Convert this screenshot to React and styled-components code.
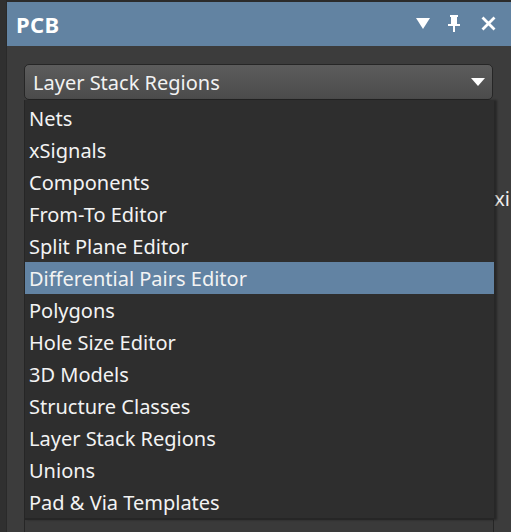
import React from "react";
import styled, { createGlobalStyle } from "styled-components";

const GlobalStyle = createGlobalStyle`
  html, body {
    margin: 0;
    padding: 0;
    background: #2d2d2d;
  }
`;

const Frame = styled.div`
  width: 511px;
  height: 532px;
  display: flex;
  overflow: hidden;
  font-family: "Noto Sans", "Open Sans", sans-serif;
`;

const LeftEdge = styled.div`
  width: 7px;
  background: #303030;
  border-right: 1px solid #2a2a2a;
  box-sizing: border-box;
`;

const Panel = styled.div`
  flex: 1;
  display: flex;
  flex-direction: column;
  border-top: 2px solid #2b2b2b;
  background: #3c3c3c;
`;

const TitleBar = styled.div`
  height: 44px;
  flex-shrink: 0;
  display: flex;
  align-items: center;
  padding: 0 15px 1px 9px;
  box-sizing: border-box;
  background: #6283a2;
  color: #fff;
`;

const Title = styled.div`
  flex: 1;
  font-size: 22px;
  font-weight: 700;
  letter-spacing: 0.3px;
`;

const TitleButtons = styled.div`
  display: flex;
  align-items: center;
  gap: 18px;

  svg:last-child {
    margin-left: 3px;
  }
`;

const Body = styled.div`
  position: relative;
  flex: 1;
  padding: 18px 18px 0 17px;
`;

const Combo = styled.div`
  height: 36px;
  box-sizing: border-box;
  display: flex;
  align-items: center;
  padding: 0 7px 0 8px;
  border: 1px solid #262626;
  border-radius: 5px;
  background: linear-gradient(#5c5c5c, #4b4b4b);
  color: #f2f2f2;
  font-size: 20px;
`;

const ComboText = styled.div`
  flex: 1;
`;

const Underlay = styled.div`
  display: flex;
  flex-direction: column;
  margin-right: -18px;
`;

const HiddenRow = styled.div`
  height: 32px;
  display: flex;
  justify-content: flex-end;
  align-items: center;
  color: #f0f0f0;
  font-size: 20px;
  white-space: nowrap;
  margin-right: 1px;
`;

const ListBox = styled.div`
  margin-top: ${(p) => p.$top}px;
  margin-right: 17px;
  height: 40px;
  border-left: 1px solid #262626;
  border-top: 2px solid #262626;
  border-right: 1px solid #262626;
  background: #3a3a3a;
`;

const Popup = styled.div`
  position: absolute;
  left: 17px;
  top: 54px;
  width: 470px;
  box-sizing: border-box;
  padding: 2px 0 0;
  background: #2e2e2e;
  border-left: 1px solid #262626;
  border-bottom: 2px solid #262626;
  box-shadow: 3px 0 2px rgba(0, 0, 0, 0.35);
`;

const Item = styled.div`
  height: 32px;
  display: flex;
  align-items: center;
  padding-left: 4px;
  font-size: 20px;
  color: #f3f3f3;
  background: ${(p) => (p.$active ? "#6283a3" : "transparent")};
`;

const items = [
  "Nets",
  "xSignals",
  "Components",
  "From-To Editor",
  "Split Plane Editor",
  "Differential Pairs Editor",
  "Polygons",
  "Hole Size Editor",
  "3D Models",
  "Structure Classes",
  "Layer Stack Regions",
  "Unions",
  "Pad & Via Templates",
];

const App = () => (
  <Frame>
    <GlobalStyle />
    <LeftEdge />
    <Panel>
      <TitleBar>
        <Title>PCB</Title>
        <TitleButtons>
          <svg width="14" height="11" viewBox="0 0 14 11">
            <path d="M0 0h14L7 11z" fill="#fff" />
          </svg>
          <svg width="12" height="17" viewBox="0 0 12 17">
            <path d="M2 0h8v2H9v7h3v2H7v6H5v-6H0V9h3V2H2z" fill="#fff" />
          </svg>
          <svg width="15" height="15" viewBox="0 0 15 15">
            <path d="M1.5 1.5l12 12M13.5 1.5l-12 12" stroke="#fff" strokeWidth="2.8" />
          </svg>
        </TitleButtons>
      </TitleBar>
      <Body>
        <Combo>
          <ComboText>Layer Stack Regions</ComboText>
          <svg width="14" height="8" viewBox="0 0 14 8">
            <path d="M0 0h14L7 8z" fill="#fff" />
          </svg>
        </Combo>
        <Underlay>
          <HiddenRow style={{ marginTop: 82 }}>Taxi</HiddenRow>
          <ListBox $top={288} />
        </Underlay>
        <Popup>
          {items.map((t, i) => (
            <Item key={t} $active={i === 5}>
              {t}
            </Item>
          ))}
        </Popup>
      </Body>
    </Panel>
  </Frame>
);

export default App;
